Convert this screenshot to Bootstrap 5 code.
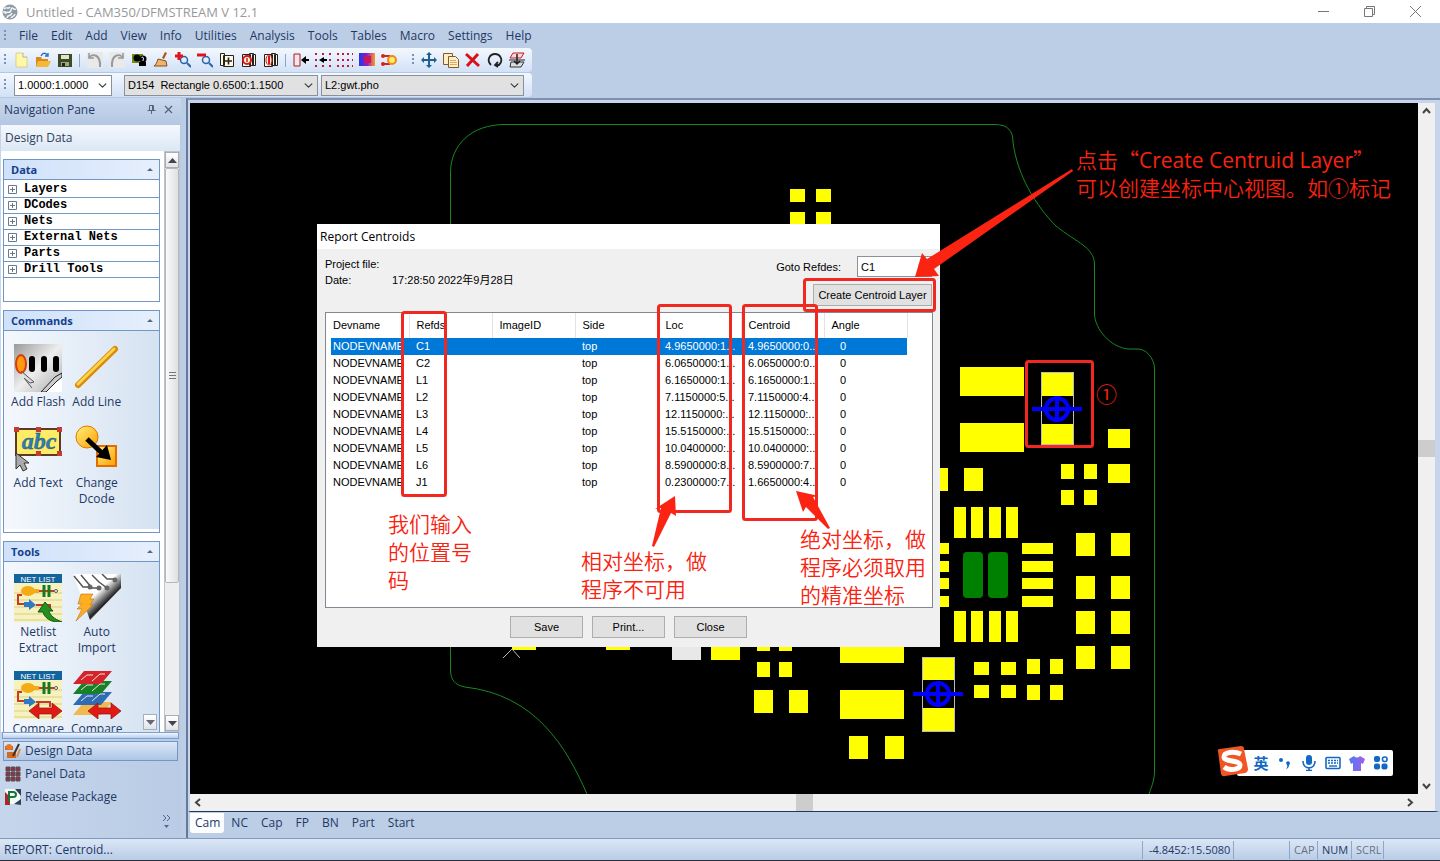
<!DOCTYPE html>
<html lang="zh-CN">
<head>
<meta charset="utf-8">
<meta name="viewport" content="width=device-width, initial-scale=1">
<title>Untitled - CAM350/DFMSTREAM V 12.1</title>
<link href="https://cdn.jsdelivr.net/npm/bootstrap@5.3.0/dist/css/bootstrap.min.css" rel="stylesheet">
<style>
:root{--ui:"Open Sans","Noto Sans CJK SC",sans-serif;--dlg:"Liberation Sans","Noto Sans CJK SC",sans-serif;--navy:#1f3864;--base:#bccee6;--red:#f9220f}
body{font-family:var(--ui);font-size:12px;line-height:16px;color:var(--navy);background:var(--base)}
button{font:inherit;color:inherit}
svg{display:block;flex:none}
.plain{background:none;border:0;padding:0}
.titlebar{height:23px;background:#fff;color:#999;font-size:13px;padding-right:2px}
.titlebar .plain{width:46px;height:23px;display:grid;place-items:center}
.menus{height:25px}
.menus .plain{padding:0 6px 0 7px}
.menus .grip{margin-right:6px}
.grip{width:2px;height:12px;background:repeating-linear-gradient(#7892b8 0 2px,transparent 2px 4px)}
.grip-inner{margin:0 4px 0 12px}
.tools{height:25px;width:532px;background:linear-gradient(#f3f8fe,#dfeafa 60%,#d2e1f5);border-radius:0 4px 4px 0;border-bottom:1px solid #b4c8e4}
.tools .plain{width:22px;height:22px;display:grid;place-items:center}
.divide{width:1px;height:13px;background:#8fa5c6;margin:0 4px 0 3px}
.combo.form-select{font:11px/14px var(--dlg);height:21px;min-height:0;padding:1px 18px 1px 3px;border:1px solid #8a919c;border-radius:0;color:#000;background-color:#e1e1e1;background-size:9px 9px;background-position:right 4px center;box-shadow:none}
.combo.field{background-color:#fff}
.sidepane{width:181px;background:linear-gradient(90deg,#c4d5ec,#bacce5)}
.sidepane>*{flex-shrink:0}
.pane-head{height:27px;padding-bottom:4px;background:linear-gradient(#c9d8ee,#b3c7e3)}
.pane-sub{height:26px;margin:0 1px;background:linear-gradient(#f4f8fd,#dce7f5);color:#33415c}
.sidepane>.pane-scroll{flex:1 1 0;min-height:0;background:#fff;margin:0 1px}
.pane-body{width:163px;padding:8px 4px 0 2px}
.group{border:1px solid #7397c4;margin-bottom:8px}
.group-head{height:20px;border-bottom:1px solid #7397c4;background:linear-gradient(90deg,#cfe1fb,#e6effc);font-weight:700;color:#12408c;padding:0 6px 0 7px;font-size:11px}
.tree{margin:0;padding:2px 0 0;list-style:none;height:121px;font:bold 12px/15px "Liberation Mono",monospace;color:#000}
.tree li{height:16px;border-bottom:1px solid #7397c4;padding-left:4px}
.tree svg{margin-right:7px}
.tiles{background:linear-gradient(90deg,#f4f8fd,#d5e2f1);border-bottom:3px solid #fff;padding:13px 33px 0 5px;display:grid;grid-template-columns:1fr 1fr;align-content:start}
.tiles .plain{display:flex;flex-direction:column;align-items:center;gap:2px}
.cmds{height:201px;grid-auto-rows:81px}
.imports{height:220px;grid-auto-rows:97px;padding-top:12px}
.vscroll{width:16px;background:#eceef0;border:1px solid #c0c4ca}
.arrowbtn{height:16px;width:14px;background:linear-gradient(#fff,#dfe4ea)!important;border:1px solid #a8aeb8!important;display:grid;place-items:center}
.thumb{flex:1;margin-bottom:132px;border-radius:2px;border:1px solid #b4b8be;background:linear-gradient(90deg,#fafafa,#dfe0e2);display:grid;place-items:center}
.morebtn{right:23px;bottom:2px;z-index:2}
.splitter{height:7px;margin:0 2px;border:1px solid #7e9fcc;background:linear-gradient(#f0f6ff,#b7cdec)}
.navbtn{height:23px;text-align:left;padding:0 2px!important;display:flex;align-items:center;gap:4px;margin:0 3px}
.navbtn.sel{height:20px;border:1px solid #7397c4;background:linear-gradient(#dce8f8,#aec6e5);margin:2px 3px 1px;padding:0 1px!important}
.pane-foot{height:30px}
.mdi{margin-left:5px;border-left:2px solid #66799a;border-top:2px solid #7f91b0;min-width:0}
.view{border:2px solid #c7d5ea;border-width:3px 5px 0 2px;border-bottom:1px solid #23365c;display:grid;grid-template:1fr 17px / 1fr 17px;min-height:0;background:#f0f0f0}
.board{background:#000;overflow:hidden;min-width:0;min-height:0}
.sb{color:#444;position:relative;display:flex;justify-content:space-between;align-items:center;padding:4px}
.sb .knob{background:#cdcdcd;width:17px;height:17px}
.tabs{height:26px;padding:1px 2px 5px}
.tabs .plain{padding:0 6px 0 7px;height:20px}
.tabs .active{background:#fbfdff;border-radius:0 0 3px 3px;padding:0 4px 0 5px}
.status{height:23px;background:linear-gradient(#dbe7f6,#b9cce7);border-top:1px solid #8299bd;border-bottom:1px solid #2a2f38}
.status span{border-left:1px solid #8fa6c8;height:18px;font-size:11px;line-height:18px;padding-left:4px;white-space:nowrap}
.status .coord{padding-left:6px}
.dialogbox{left:127px;top:121px;width:623px;height:423px;background:#f0f0f0;color:#000;font:11px/16px var(--dlg)}
.dialogbox h1{font:12px/25px var(--ui);height:25px;background:#fff;margin:0;padding-left:3px}
.info{height:64px;padding:7px 8px 0 8px}
.win{font:11px/14px var(--dlg);border:1px solid #adadad;background:#e1e1e1;border-radius:0;color:#000;padding:0;height:22px}
.info .win{margin-top:7px}
.listbox{height:296px;margin:-1px 7px 0 8px;border:1px solid #828790;background:#fff;padding:0 5px}
.actions{gap:9px;padding-top:8px}
.report{width:576px;table-layout:fixed;margin:0;font:11px/17px var(--dlg)}
.report>:not(caption)>*>*{padding:0 6px 0 7px;border:0;white-space:nowrap;overflow:hidden;text-overflow:clip;color:#000;background:none;height:17px;box-shadow:none}
.report>thead>tr>th{height:25px;font-weight:400;border-right:1px solid #e3e3e3;vertical-align:middle}
.report>:not(caption)>*>:first-child{padding:0 0 0 2px}
.report>tbody>tr>td:last-child{padding-left:16px}
.report>tbody>.chosen>td{background:#0078d7;color:#fff}
.note{position:absolute;margin:0;color:var(--red);font:350 21px/28px "Noto Sans CJK SC DemiLight","Noto Sans CJK SC",sans-serif}
.note .latin{font-family:"Open Sans",sans-serif;font-weight:400;line-height:1}
.ime{right:25px;bottom:18px;height:26px;background:#fff;border-radius:2px;color:#1268c4;padding-left:12px}
.ime .plain{width:24px;height:26px;display:grid;place-items:center;font:bold 15px/20px "Noto Sans CJK SC",sans-serif}
.logo{left:-21px;top:-4px}
</style>
</head>
<body class="vh-100 overflow-hidden d-flex flex-column">
<svg width="0" height="0" class="position-absolute" aria-hidden="true"><defs>
<linearGradient id="gold" x2="1" y2="1"><stop stop-color="#fff27a"/><stop offset="1" stop-color="#ff9d00"/></linearGradient>
<linearGradient id="silver" x2="1" y2="1"><stop stop-color="#999"/><stop offset=".5" stop-color="#eee"/><stop offset="1" stop-color="#aaa"/></linearGradient>
<linearGradient id="curl" x2="1" y2="1"><stop offset=".45" stop-color="#fff"/><stop offset=".65" stop-color="#222"/><stop offset=".8" stop-color="#eee"/></linearGradient>
<linearGradient id="heat"><stop stop-color="#2038e8"/><stop offset=".5" stop-color="#8a20c0"/><stop offset="1" stop-color="#ff9b20"/></linearGradient>
<linearGradient id="shirt" x2="1"><stop stop-color="#4d7df0"/><stop offset="1" stop-color="#a45ce8"/></linearGradient>
<g id="netlist"><path fill="#f7f2bd" d="M0 0h48v48H0z"/><path stroke="#d8cf86" d="M0 19h48M0 26h48M0 33h48M0 40h48M0 46h48"/><path fill="#12649f" d="M0 0h48v9H0z"/><text x="24" y="8" text-anchor="middle" font-family="Liberation Sans,sans-serif" font-size="8" fill="#fff">NET LIST</text><path d="M10 17H40" stroke="#c83a28" stroke-width="2"/><ellipse cx="14" cy="17" rx="7" ry="5" fill="#f4ac16"/><path d="M18 15h7v4h-7z" fill="#f4ac16"/><path d="M30 11v12M35 11v12" stroke="#157a22" stroke-width="3"/><path d="M8 21H4v9h9m9 1h14v5" fill="none" stroke="#c83a28" stroke-width="2"/><path d="M10 28h5v-3l7 6-7 5v-3h-5z" fill="#2e7bc4"/><circle cx="42" cy="17" r="1.500" fill="#fff" stroke="#555"/></g>
<path id="swap" d="M15 40l10-8v5h13v-5l10 8-10 8v-5H25v5z" fill="#e01b16" stroke="#8d120d" stroke-width=".7"/>
<g id="target" stroke="#00f" fill="none"><circle r="11" stroke-width="4"/><path d="M-25 0H25M0-13V13" stroke-width="4"/></g>
</defs></svg>

<header>
<div class="titlebar d-flex align-items-center">
<svg style="margin-left:2px" width="16" height="16" viewBox="0 0 16 16"><circle cx="8" cy="8" r="7.500" fill="#8d9ba5"/><path d="M2 5c3-3 4 1 6-2M3 10c2-4 5 1 6-4s3 1 5-1M5 14c0-4 4-1 5-5M9 14c1-2 3-1 4-4M1 8h3" stroke="#f2f5f7" stroke-width="1.400" fill="none"/></svg>
<span class="ms-2">Untitled - CAM350/DFMSTREAM V 12.1</span>
<div class="ms-auto d-flex">
<button class="plain" aria-label="Minimize"><svg width="11" height="11" stroke="#777"><path d="M0 5.500h11"/></svg></button>
<button class="plain" aria-label="Restore"><svg width="11" height="11" stroke="#777" fill="none"><path d="M.5 2.500h8v8h-8zM2.500 2.500v-2h8v8h-2"/></svg></button>
<button class="plain" aria-label="Close window"><svg width="11" height="11" stroke="#777"><path d="M0 0l11 11M11 0L0 11"/></svg></button>
</div></div>
<nav class="menus d-flex align-items-center ps-1" aria-label="Main menu"><i class="grip"></i>
<button class="plain">File</button><button class="plain">Edit</button><button class="plain">Add</button><button class="plain">View</button><button class="plain">Info</button><button class="plain">Utilities</button><button class="plain">Analysis</button><button class="plain">Tools</button><button class="plain">Tables</button><button class="plain">Macro</button><button class="plain">Settings</button><button class="plain">Help</button></nav>
<div class="tools d-flex align-items-center ps-1" role="toolbar" aria-label="Standard"><i class="grip me-1"></i>
<button class="plain" aria-label="New"><svg width="16" height="16"><path d="M3 1h7l4 4v10H3z" fill="#fff8a8" stroke="#c9bb62" stroke-width=".6"/><path d="M10 1v4h4" fill="#fff" stroke="#aaa"/></svg></button>
<button class="plain" aria-label="Open"><svg width="16" height="16"><path d="M1 5h5l1 2h6v7H1z" fill="#d88b14"/><path d="M3 9h13l-3 6H1z" fill="#f5b73a"/><path d="M6 4c2-4 5-3 6-1m1-2v3h-3" fill="none" stroke="#2a70c0" stroke-width="1.400"/></svg></button>
<button class="plain" aria-label="Save"><svg width="16" height="16"><path d="M1 2h14v13H1z" fill="#3d4a26"/><path d="M4 3h8v4H4z" fill="#dfe5cf"/><path d="M4 10h8v4H4z" fill="#9dab7c"/><path d="M5 11h3v3H5z" fill="#222"/></svg></button>
<i class="divide"></i>
<button class="plain" aria-label="Undo"><svg width="16" height="16" fill="none"><path d="M0 0h16v16H0z" fill="#e9e9e9"/><path d="M2 1v5h5" stroke="#999" stroke-width="1.500"/><path d="M2 6c3-5 12-4 11 9" stroke="#999" stroke-width="2"/></svg></button>
<button class="plain" aria-label="Redo"><svg width="16" height="16" fill="none"><path d="M0 0h16v16H0z" fill="#e9e9e9"/><path d="M14 1v5H9" stroke="#999" stroke-width="1.500"/><path d="M14 6C11 1 2 2 3 15" stroke="#999" stroke-width="2"/></svg></button>
<button class="plain" aria-label="Query"><svg width="16" height="16"><path d="M1 2h11v9H1z" fill="#718b16"/><circle cx="6" cy="6" r="3.500"/><circle cx="12" cy="7" r="3.500"/><path d="M8 10h7v4H8z"/><path d="M10.500 6c1-2 3 0 1.500 2v1" stroke="#fff" fill="none"/></svg></button>
<button class="plain" aria-label="Redraw"><svg width="16" height="16"><path d="M12 0L9 6l2 1 3-6z" fill="#a75819"/><path d="M5 7l8 2 1 5H1c2-1 3-4 4-7z" fill="#efb46a" stroke="#80501f"/></svg></button>
<button class="plain" aria-label="Zoom in"><svg width="16" height="16" fill="none"><circle cx="9" cy="8" r="3.500" stroke="#2866a8" stroke-width="1.500"/><path d="M12 11l4 4" stroke="#2866a8" stroke-width="2"/><path d="M4 0v8M0 4h8" stroke="#e2141a" stroke-width="3"/></svg></button>
<button class="plain" aria-label="Zoom out"><svg width="16" height="16" fill="none"><circle cx="9" cy="8" r="3.500" stroke="#2866a8" stroke-width="1.500"/><path d="M12 11l4 4" stroke="#2866a8" stroke-width="2"/><path d="M0 3h9" stroke="#e2141a" stroke-width="3"/></svg></button>
<button class="plain" aria-label="Zoom window"><svg width="16" height="16" fill="#fff8db" stroke="#222"><path d="M1.500 1.500h4v12h-4zM4.500 3.500h10v11h-10z"/><path d="M9.500 5.500v7M6 9h7" stroke-width="1.600"/></svg></button>
<button class="plain" aria-label="Zoom previous"><svg width="16" height="16" fill="#fff8db" stroke="#222"><path d="M11.500 2.500h3v11h-3zM8.500 1.500h4v12h-4zM1.500 2.500h8v12h-8z"/><circle cx="6" cy="8" r="4" stroke="#d5171a" stroke-width="2"/><path d="M6 6v4" stroke="#d5171a" stroke-width="1.500"/></svg></button>
<button class="plain" aria-label="Zoom all"><svg width="16" height="16" fill="#fff8db" stroke="#222"><path d="M11.500 2.500h3v11h-3zM8.500 1.500h4v12h-4zM1.500 2.500h8v12h-8z"/><ellipse cx="6" cy="8" rx="3" ry="5" stroke="#d5171a"/><path d="M6 4v8" stroke="#d5171a" stroke-width="2"/></svg></button>
<i class="divide"></i>
<button class="plain" aria-label="Snap to edge"><svg width="16" height="16"><path d="M1 2h6v12H1z" fill="#f8e5e5" stroke="#a51b26"/><path d="M16 7h-3V4L8 8l5 4V9h3z"/></svg></button>
<button class="plain" aria-label="Snap grid"><svg width="16" height="16"><path d="M0 2h16M0 14h16" stroke="#c31a31" stroke-width="2" stroke-dasharray="2 5"/><path d="M0 8h2M14 8h2" stroke="#c31a31" stroke-width="2"/><path d="M12 7H9V5L4 8l5 3V9h3z"/></svg></button>
<button class="plain" aria-label="Grid"><svg width="16" height="16"><path d="M0 2h16M0 8h16M0 14h16" stroke="#c31a31" stroke-width="2" stroke-dasharray="2 3"/></svg></button>
<button class="plain" aria-label="Colors"><svg width="16" height="16"><path d="M0 1h16v13H0z" fill="url(#heat)"/><path d="M5 4h7v7H5z" fill="#c71563"/></svg></button>
<button class="plain" aria-label="Highlight"><svg width="16" height="16"><path d="M2 4h7M2 12h7" stroke="#d6221b" stroke-width="2"/><circle cx="2" cy="4" r="2" fill="#d6221b"/><circle cx="2" cy="12" r="2" fill="#d6221b"/><circle cx="11" cy="8" r="4" fill="#ffe96b" stroke="#ee8b18" stroke-width="2"/></svg></button>
<i class="grip grip-inner"></i>
<button class="plain" aria-label="Move"><svg width="16" height="16" fill="#1d5f91"><path d="M8 0l3 3H9v4h4V5l3 3-3 3V9H9v4h2l-3 3-3-3h2V9H3v2L0 8l3-3v2h4V3H5z"/></svg></button>
<button class="plain" aria-label="Copy"><svg width="16" height="16" fill="#ffedc4" stroke="#825a29"><path d="M.5 1.500h9v11h-9z"/><path d="M5.500 4.500h7l3 3v8h-10z"/><path d="M7 8.500h6M7 10.500h7M7 12.500h7" stroke="#c79a5c" stroke-width=".8"/></svg></button>
<button class="plain" aria-label="Delete"><svg width="16" height="16" stroke="#d91119" stroke-width="3"><path d="M1 2l13 12M13 2L2 14"/></svg></button>
<button class="plain" aria-label="Rotate"><svg width="16" height="16" fill="none" stroke="#222" stroke-width="1.800"><path d="M4 13C-1 8 3 2 8 2s9 6 4 11H8m3-3l-3 3 3 2"/></svg></button>
<button class="plain" aria-label="Mirror"><svg width="16" height="16" fill="none"><path d="M4 1h11l-3 5H1z" fill="#fbd5d7" stroke="#c71d27"/><path d="M2 10h13l-3 5H1z" fill="#ddd" stroke="#333"/><path d="M0 8h16" stroke="#222"/><path d="M8 2v10M5 9l3 3 3-3" stroke="#222" stroke-width="1.500"/></svg></button>
</div>
<div class="tools d-flex align-items-center ps-1"><i class="grip me-2"></i>
<div style="width:98px"><select class="form-select combo field" aria-label="Grid size"><option>1.0000:1.0000</option></select></div>
<div class="ms-2 ps-1" style="width:198px"><select class="form-select combo" aria-label="D-code"><option>D154&nbsp; Rectangle 0.6500:1.1500</option></select></div>
<div style="width:203px;margin-left:3px"><select class="form-select combo" aria-label="Layer"><option>L2:gwt.pho</option></select></div>
</div>
</header>

<div class="d-flex flex-grow-1" style="min-height:0">
<aside class="sidepane d-flex flex-column flex-shrink-0">
<div class="pane-head d-flex align-items-center ps-1"><span>Navigation Pane</span>
<button class="plain ms-auto" aria-label="Pin"><svg width="9" height="9" fill="none" stroke="#596477"><path d="M2.500 5V.5h4V5M.5 5.500h8M4.500 5v4M5.500 1v4"/></svg></button>
<button class="plain ms-2 me-1 pe-1" aria-label="Close pane"><svg width="9" height="9" stroke="#596477" stroke-width="1.300"><path d="M1 1l7 7M8 1L1 8"/></svg></button></div>
<div class="pane-sub d-flex align-items-center ps-1">Design Data</div>
<div class="pane-scroll d-flex overflow-hidden position-relative">
<div class="pane-body">
<section class="group"><div class="group-head d-flex align-items-center justify-content-between"><span>Data</span><svg width="6" height="3" fill="#52688a"><path d="M0 3l3-3 3 3"/></svg></div>
<ul class="tree" id="tree"></ul></section>
<section class="group"><div class="group-head d-flex align-items-center justify-content-between"><span>Commands</span><svg width="6" height="3" fill="#52688a"><path d="M0 3l3-3 3 3"/></svg></div>
<div class="tiles cmds">
<button class="plain"><svg width="48" height="48"><path d="M0 0h48v48H0z" fill="url(#silver)"/><ellipse cx="7" cy="20" rx="5" ry="9" fill="#ff9a12" stroke="#d63c10" stroke-width="2"/><rect x="15" y="12" width="6" height="16" rx="3"/><rect x="27" y="12" width="6" height="16" rx="3"/><rect x="39" y="12" width="6" height="16" rx="3"/><path d="M7 27l13 11-4 1-6-5 8 10" fill="#ddd" stroke="#555"/><path d="M48 30v18H29l13-12z" fill="#fff"/><path d="M27 48l14-15 7-4v4l-5 4-11 11z" fill="#ccc" stroke="#222"/></svg>Add Flash</button>
<button class="plain"><svg width="48" height="48" stroke-linecap="round"><path d="M5 41L42 5" stroke="#d88b08" stroke-width="6"/><path d="M5 40L41 5" stroke="#ffd347" stroke-width="3"/></svg>Add Line</button>
<button class="plain"><svg width="48" height="48"><path d="M2 4h44v26H2z" fill="#ffec66" stroke="#5d3a24" stroke-width="2"/><path d="M0 2h5v5H0zm22 0h5v5h-5zm21 0h5v5h-5zM22 26h5v5h-5zm21 0h5v5h-5z" fill="#c63a34"/><text x="25" y="24" text-anchor="middle" font-family="Liberation Serif,serif" font-size="24" font-style="italic" font-weight="700" fill="#2c7fb0" stroke="#235577" stroke-width=".4">abc</text><path d="M2 28v16l4-4 3 6 4-2-3-6h5z" fill="#aaa" stroke="#333"/></svg>Add Text</button>
<button class="plain"><svg width="48" height="48"><circle cx="14" cy="12" r="11" fill="url(#gold)" stroke="#dc7800"/><path d="M24 21h19v20H24z" fill="url(#gold)" stroke="#e66c00" stroke-width="2"/><path d="M14 14l17 16" stroke="#000" stroke-width="5"/><path d="M38 35l-4-15-11 12z"/></svg><span>Change<br>Dcode</span></button>
</div></section>
<section class="group"><div class="group-head d-flex align-items-center justify-content-between"><span>Tools</span><svg width="6" height="3" fill="#52688a"><path d="M0 3l3-3 3 3"/></svg></div>
<div class="tiles imports">
<button class="plain"><svg width="48" height="48"><use href="#netlist"/><path d="M48 48C36 49 30 43 29 38h-5l7-10 8 9h-4c1 4 5 8 13 11z" fill="#24911f" stroke="#165a13"/></svg><span>Netlist<br>Extract</span></button>
<button class="plain"><svg width="48" height="48"><path d="M0 0h48v14L17 46z" fill="url(#curl)"/><path d="M1 2l9 11h5M8 1l11 13h6M19 1l7 7 8 6M29 0l5 5h7" fill="none" stroke="#555" stroke-width="1.500"/><g fill="#666"><circle cx="17" cy="13" r="2.500"/><circle cx="26" cy="14" r="2.500"/><circle cx="34" cy="14" r="2.500"/><circle cx="42" cy="6" r="2.500"/></g><path d="M8 20h12l-3 5h4l-4 6h3L3 47l6-12H4l5-5H5z" fill="#ffad22" stroke="#bd6f09" stroke-width=".6"/></svg><span>Auto<br>Import</span></button>
<button class="plain"><svg width="48" height="48"><use href="#netlist"/><use href="#swap"/></svg>Compare</button>
<button class="plain"><svg width="48" height="48"><path d="M11 31h28l-11 13H0z" fill="#f1b84d"/><path d="M11 21h28L28 34H0z" fill="#2e6db4"/><path d="M11 10h28L28 23H0z" fill="#168126"/><path d="M11 0h28L28 13H0z" fill="#d3242b"/><path d="M8 9l6-5h6M19 10l8-7h5M8 19l6-5h6M19 20l8-7h5M8 30l6-5h6M19 30l8-7h5" fill="none" stroke="#f9dede"/><use href="#swap"/></svg>Compare</button>
</div></section>
</div>
<div class="vscroll ms-auto d-flex flex-column"><button class="plain arrowbtn" aria-label="Scroll up"><svg width="9" height="5" fill="#444"><path d="M0 5l4.500-5L9 5"/></svg></button><div class="thumb"><svg width="7" height="8" stroke="#777"><path d="M0 .5h7M0 3.500h7M0 6.500h7"/></svg></div><button class="plain arrowbtn" aria-label="Scroll down"><svg width="9" height="5" fill="#444"><path d="M0 0l4.500 5L9 0"/></svg></button></div>
<button class="plain arrowbtn morebtn position-absolute" aria-label="More tools"><svg width="9" height="5" fill="#667"><path d="M0 0l4.500 5L9 0"/></svg></button>
</div>
<div class="splitter"></div>
<button class="plain navbtn sel"><svg width="16" height="16"><path d="M0 3h8v4H0zM2 9h9v6H2z" fill="#d66a1c"/><circle cx="4" cy="4" r="3" fill="#e87922"/><path d="M8 13l6-12" stroke="#333" stroke-width="2"/><path d="M12 14l3-8" stroke="#e38b35" stroke-width="2"/></svg>Design Data</button>
<button class="plain navbtn"><svg width="16" height="16"><path d="M1 1h4v4H1zm5 0h4v4H6zm5 0h4v4h-4zM1 6h4v4H1zm5 0h4v4H6zm5 0h4v4h-4zM1 11h4v4H1zm5 0h4v4H6zm5 0h4v4h-4z" fill="#8b3440" stroke="#5b5158"/></svg>Panel Data</button>
<button class="plain navbtn"><svg width="16" height="16"><path d="M0 0h15v15H0z" fill="#f5faf5"/><path d="M0 3l5 5v8H0z" fill="#b0242b"/><path d="M4 13V3h4c4 0 4 5 0 5H5" fill="none" stroke="#17733d" stroke-width="2"/><path d="M10 0h6v7zM9 15l7-5v6z" fill="#31415c"/></svg>Release Package</button>
<div class="pane-foot d-flex justify-content-end align-items-center pe-2 pb-1"><button class="plain" aria-label="Configure buttons"><svg width="11" height="16" fill="none" stroke="#52688a"><path d="M1 2l3 3-3 3M5 2l3 3-3 3"/><path d="M2 12h5l-2.500 3z" fill="#52688a" stroke="none"/></svg></button></div>
</aside>

<main class="mdi flex-grow-1 d-flex flex-column">
<div class="view flex-grow-1">
<div class="board position-relative">
<svg class="position-absolute top-0 start-0" width="100%" height="100%" aria-label="Board layout"><g transform="translate(-190 -103)">
<path fill="none" stroke="#178a1e" d="M450.500 647V172C451 145 471 124.500 505 124.500H995C1008 124.500 1013 131 1013 142C1017 175 1036 206 1056 226C1077 243 1094 247 1094.500 264V314C1095 329 1110 347 1128 349H1138C1146 349 1154 358 1154.500 368V773C1154 782 1151 788 1149 794M450.500 647V671C451 679 454 685 465 687C535 695 566 746 587 794"/>
<path fill="#ff0" d="M790 189h15v13h-15zm26 0h15v13h-15zM790 212h15v13h-15zm26 0h15v13h-15zM512 640h24v10h-24zM606 640h24v10h-24zM711 640h29v20h-29zM757 640h13v11h-13zM779 640h13v11h-13zM757 662h13v15h-13zM779 662h13v15h-13zM754 690h19v23h-19zM789 690h19v23h-19zM840 640h64v23h-64zM840 690h64v29h-64zM849 736h19v23h-19zM885 736h19v23h-19zM922 657h33v23h-33zM922 708h33v24h-33z
M960 367h64v29h-64zM960 423h64v29h-64zM1041 372h33v24h-33zM1041 424h33v21h-33zM1108 429h22v19h-22zM1108 464h22v19h-22zM1061 464h13v15h-13zM1084 464h13v15h-13zM1061 490h13v15h-13zM1084 490h13v15h-13zM930 468h18v23h-18zM964 468h19v23h-19z
M954 507h12v31h-12zM971 507h12v31h-12zM989 507h12v31h-12zM1006 507h12v31h-12zM954 611h12v31h-12zM971 611h12v31h-12zM989 611h12v31h-12zM1006 611h12v31h-12zM930 543h19v11h-19zM930 561h19v11h-19zM930 578h19v11h-19zM930 596h19v11h-19zM1022 543h31v11h-31zM1022 561h31v11h-31zM1022 578h31v11h-31zM1022 596h31v11h-31z
M1076 533h19v23h-19zM1111 533h19v23h-19zM1076 576h19v23h-19zM1111 576h19v23h-19zM1076 611h19v23h-19zM1111 611h19v23h-19zM1076 646h19v23h-19zM1111 646h19v23h-19zM974 662h15v13h-15zM1001 662h15v13h-15zM974 685h15v13h-15zM1001 685h15v13h-15zM1027 659h13v15h-13zM1050 659h13v15h-13zM1027 685h13v15h-13zM1050 685h13v15h-13z"/>
<path d="M672 640h29v20h-29z" fill="#e8e8e8"/><path d="M503 658l9-9 8 9M1041.500 372.500h32v72h-32zM922.500 657.500h32v74h-32z" fill="none" stroke="#bbb"/>
<rect x="963" y="552" width="20" height="46" rx="4" fill="#008000"/><rect x="988" y="552" width="20" height="46" rx="4" fill="#008000"/>
<use href="#target" x="1057" y="409"/><use href="#target" x="938" y="694"/>
</g></svg>

<section class="dialogbox position-absolute" role="dialog" aria-labelledby="dlgTitle">
<h1 id="dlgTitle">Report Centroids</h1>
<div class="info d-flex justify-content-between">
<div><div>Project file:</div><div class="d-flex"><span style="width:67px">Date:</span><span>17:28:50 2022年9月28日</span></div></div>
<div class="d-flex flex-column align-items-end"><div class="d-flex align-items-center gap-3"><label for="goto">Goto Refdes:</label><select id="goto" class="form-select combo field" style="width:75px"><option>C1</option></select></div>
<button class="win" style="width:119px">Create Centroid Layer</button></div>
</div>
<div class="listbox"><table class="table report"><colgroup><col style="width:78px"><col span="6" style="width:83px"></colgroup><thead><tr><th>Devname</th><th>Refds</th><th>ImageID</th><th>Side</th><th>Loc</th><th>Centroid</th><th>Angle</th></tr></thead><tbody id="rows"></tbody></table></div>
<div class="actions d-flex justify-content-center"><button class="win" style="width:73px">Save</button><button class="win" style="width:73px">Print...</button><button class="win" style="width:73px">Close</button></div>
</section>

<svg class="position-absolute top-0 start-0 pe-none" width="100%" height="100%" aria-hidden="true"><g transform="translate(-190 -103)" fill="none" stroke="#f02820" stroke-width="3"><rect x="402.500" y="312.500" width="43" height="183" rx="2"/><rect x="658.500" y="305.500" width="72" height="206" rx="2"/><rect x="743.500" y="305.500" width="73" height="214" rx="2"/><rect x="804.500" y="279.500" width="130" height="31" rx="2"/><rect x="1026.500" y="361.500" width="66" height="85" rx="2"/>
<g fill="#fb2413" stroke="none"><path d="M1072 169L927 259 922 253 915 277 939 276 934 269 1073 171z"/><path d="M652 546l9-38-6 1 20-13 1 20-5-3-17 34z"/><path d="M830 528l-17-31 6-1-23-5 7 21 3-5 22 22z"/></g></g></svg>
<p class="note" style="left:886px;top:42px">点击“<span class="latin">Create Centruid Layer</span>”<br>可以创建坐标中心视图。如①标记</p>
<p class="note" style="left:906px;top:276px">①</p>
<p class="note" style="left:198px;top:406px">我们输入<br>的位置号<br>码</p>
<p class="note" style="left:391px;top:443px">相对坐标，做<br>程序不可用</p>
<p class="note" style="left:610px;top:421px">绝对坐标，做<br>程序必须取用<br>的精准坐标</p>

<div class="ime position-absolute d-flex">
<svg class="logo position-absolute" width="32" height="32" viewBox="0 0 32 32"><path d="M2 5Q1 3 4 3L25 0q3 0 3 3l4 20q0 3-3 4L9 30q-3 1-4-2z" fill="#f15523"/><path d="M25 8C18 5 8 6 8 11s16 3 16 8-11 6-16 2" fill="none" stroke="#fff" stroke-width="5"/></svg>
<button class="plain">英</button>
<button class="plain" aria-label="Punctuation"><svg width="14" height="14" fill="#1268c4"><circle cx="3" cy="4" r="2"/><path d="M8 7a2 2 0 1 1 3 2q0 3-3 4 2-2 1-4z"/></svg></button>
<button class="plain" aria-label="Voice"><svg width="14" height="16" fill="#1268c4"><rect x="4" width="6" height="10" rx="3"/><path d="M1 6c0 9 12 9 12 0M7 12v4M4 15.500h6" fill="none" stroke="#1268c4" stroke-width="1.600"/></svg></button>
<button class="plain" aria-label="Keyboard"><svg width="16" height="14"><rect x="1" y="1.500" width="14" height="11" rx="1" fill="none" stroke="#1268c4" stroke-width="1.600"/><path d="M3 4.500h10M3 7h10" stroke="#1268c4" stroke-width="1.500" stroke-dasharray="2 1"/><path d="M4 10h8" stroke="#1268c4" stroke-width="1.400"/></svg></button>
<button class="plain" aria-label="Skin"><svg width="16" height="16"><path d="M5 1q3 3 6 0l5 3-2 5-2-1v8H4V8L2 9 0 4z" fill="url(#shirt)"/></svg></button>
<button class="plain" aria-label="Toolbox"><svg width="14" height="14" fill="#1268c4"><rect width="6" height="6" rx="2"/><rect x="8.500" y="1" width="4.500" height="4.500" rx="2" fill="none" stroke="#1268c4" stroke-width="1.600"/><rect y="7.500" width="6" height="6" rx="2"/><rect x="7.500" y="7.500" width="6" height="6" rx="2"/></svg></button>
</div>
</div>
<div class="sb flex-column"><svg width="9" height="8" fill="none" stroke="#444" stroke-width="2"><path d="M1 6l3.500-4L8 6"/></svg><i class="knob"></i><svg width="9" height="8" fill="none" stroke="#444" stroke-width="2"><path d="M1 2l3.500 4L8 2"/></svg></div>
<div class="sb"><svg width="8" height="9" fill="none" stroke="#444" stroke-width="2"><path d="M6 1L2 4.500 6 8"/></svg><i class="knob"></i><svg width="8" height="9" fill="none" stroke="#444" stroke-width="2"><path d="M2 1l4 3.500L2 8"/></svg></div>
<div></div>
</div>
<div class="tabs d-flex"><button class="plain active">Cam</button><button class="plain">NC</button><button class="plain">Cap</button><button class="plain">FP</button><button class="plain">BN</button><button class="plain">Part</button><button class="plain">Start</button></div>
</main>
</div>
<footer class="status d-flex align-items-center flex-shrink-0"><div class="ps-1 me-auto">REPORT: Centroid...</div>
<span class="coord" style="width:91px">-4.8452:15.5080</span><span style="width:56px"></span><span class="text-black-50" style="width:28px">CAP</span><span style="width:34px">NUM</span><span class="text-black-50" style="width:32px">SCRL</span><span style="width:57px"></span></footer>

<script src="https://cdn.jsdelivr.net/npm/bootstrap@5.3.0/dist/js/bootstrap.bundle.min.js"></script>
<script>
document.getElementById('tree').innerHTML=['Layers','DCodes','Nets','External Nets','Parts','Drill Tools'].map(t=>`<li class="d-flex align-items-center"><svg width="9" height="9" fill="#fff" stroke="#6b7890"><path d="M.5 .5h8v8h-8zM2 4.500h5M4.500 2v5"/></svg>${t}</li>`).join('');
const data=[['C1','4.9650000:1...','4.9650000:0...'],['C2','6.0650000:1...','6.0650000:0...'],['L1','6.1650000:1...','6.1650000:1...'],['L2','7.1150000:5...','7.1150000:4...'],['L3','12.1150000:...','12.1150000:...'],['L4','15.5150000:...','15.5150000:...'],['L5','10.0400000:...','10.0400000:...'],['L6','8.5900000:8...','8.5900000:7...'],['J1','0.2300000:7...','1.6650000:4...']];
document.getElementById('rows').innerHTML=data.map((r,i)=>`<tr class="${i?'':'chosen'}"><td>NODEVNAME</td><td>${r[0]}</td><td></td><td>top</td><td>${r[1]}</td><td>${r[2]}</td><td>0</td></tr>`).join('');
</script>
</body>
</html>
